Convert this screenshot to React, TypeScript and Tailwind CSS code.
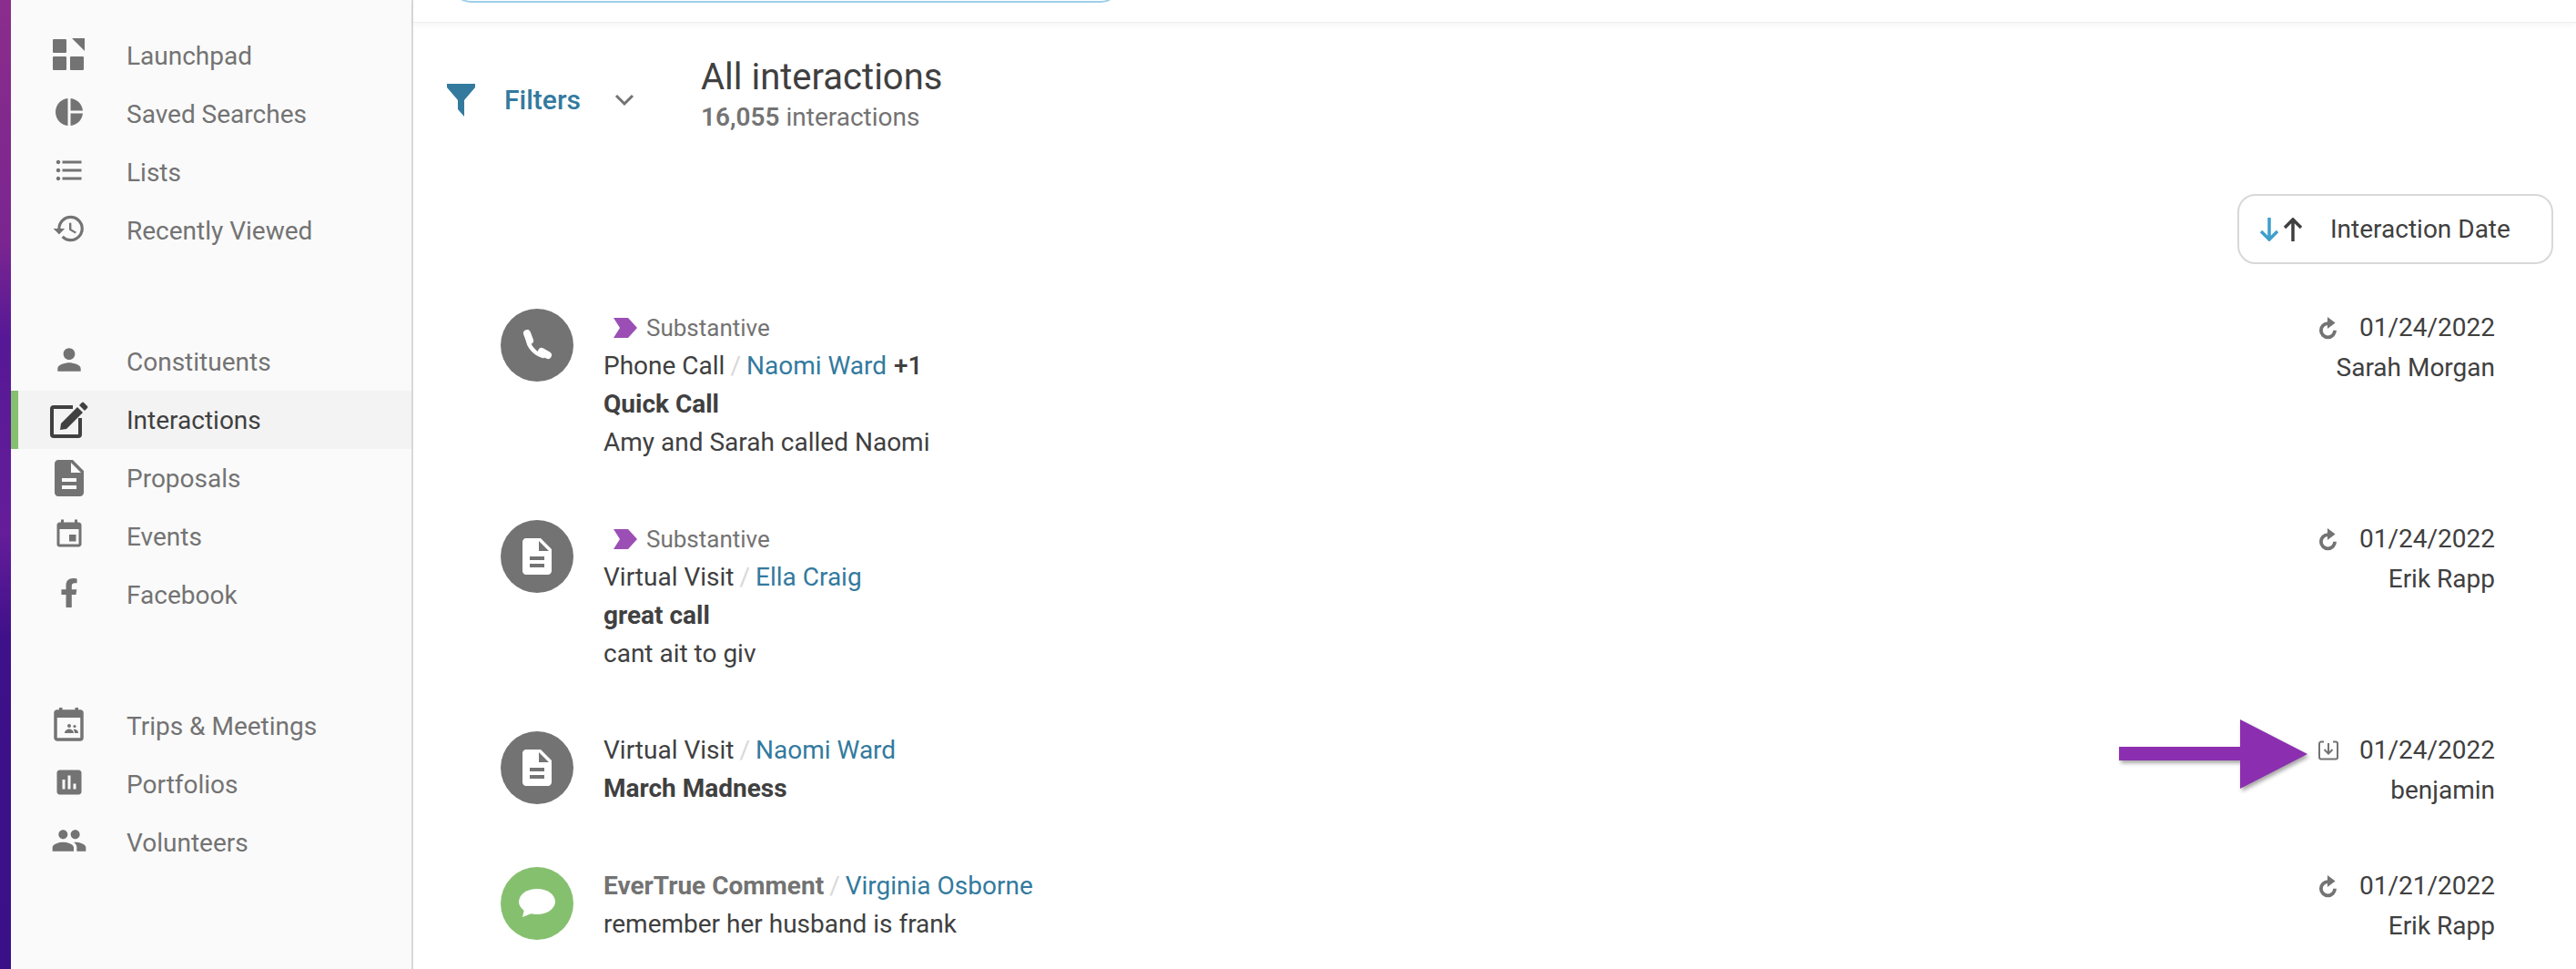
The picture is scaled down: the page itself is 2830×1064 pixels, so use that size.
import { type JSX, type ReactNode } from 'react'
import { MdAssessment, MdDescription, MdEvent, MdFormatListBulleted, MdHistory, MdPeople, MdPerson, MdPieChart } from 'react-icons/md'
import { FaFacebookF } from 'react-icons/fa'

function LaunchpadIcon(): JSX.Element {
  return (
    <svg width="36" height="36" viewBox="0 0 36 36" fill="currentColor">
      <rect x="0" y="1" width="15" height="15" rx="1" />
      <rect x="0" y="20" width="15" height="15" rx="1" />
      <rect x="19" y="20" width="15" height="15" rx="1" />
      <polygon points="21,0 35,0 35,14" />
    </svg>
  )
}

function EditIcon(): JSX.Element {
  return (
    <svg width="42" height="40" viewBox="0 0 42 40" fill="none">
      <path d="M25 6H4a2 2 0 0 0-2 2v28a2 2 0 0 0 2 2h27a2 2 0 0 0 2-2V18" stroke="currentColor" strokeWidth="4" />
      <path d="M12 24L30 6l6 6-18 18-7 1z" fill="currentColor" />
      <path d="M32 4l3-3a1.5 1.5 0 0 1 2 0l4 4a1.5 1.5 0 0 1 0 2l-3 3z" fill="currentColor" />
    </svg>
  )
}

function TripsIcon(): JSX.Element {
  return (
    <svg width="33" height="38" viewBox="0 0 33 38" fill="none">
      <rect x="2" y="5" width="29" height="31" rx="2" stroke="currentColor" strokeWidth="3.5" />
      <rect x="2" y="5" width="29" height="7" fill="currentColor" />
      <rect x="6" y="1" width="3.5" height="6" fill="currentColor" />
      <rect x="23.5" y="1" width="3.5" height="6" fill="currentColor" />
      <circle cx="17" cy="21" r="2" fill="currentColor" />
      <circle cx="23" cy="21.5" r="1.6" fill="currentColor" />
      <path d="M12 29c0-3 3-4.500 5-4.500s5 1.500 5 4.500zM23 29c0-2-.6-3-1.500-4 2-.6 5.500.6 5.500 4z" fill="currentColor" />
    </svg>
  )
}

function PhoneIcon(): JSX.Element {
  return (
    <svg width="34" height="34" viewBox="0 0 34 34" fill="none" stroke="white" strokeLinecap="round">
      <path d="M6 4l3 8" strokeWidth="8" />
      <path d="M7 10c0 8 8 17 17 19" strokeWidth="4.500" />
      <path d="M22 24l7 4" strokeWidth="8" />
    </svg>
  )
}

function RedoIcon(): JSX.Element {
  return (
    <svg width="22" height="26" viewBox="0 0 20 24" fill="none" className="text-[#737373]">
      <path d="M16.500 14.500a7 7 0 1 1-7-7" stroke="currentColor" strokeWidth="3.500" />
      <polygon points="9,1 17,7 9,13" fill="currentColor" />
    </svg>
  )
}

function ImportIcon(): JSX.Element {
  return (
    <svg width="22" height="22" viewBox="0 0 22 22" fill="none" className="text-[#737373]">
      <path d="M6 1.500H3a2 2 0 0 0-2 2v15a2 2 0 0 0 2 2h16a2 2 0 0 0 2-2v-15a2 2 0 0 0-2-2h-3" stroke="currentColor" strokeWidth="2" />
      <path d="M11 3v11M6.500 10l4.500 4.500 4.500-4.500" stroke="currentColor" strokeWidth="2" />
    </svg>
  )
}

function NavItem({ icon, label, active, nudge }: { icon: ReactNode; label: string; active?: boolean; nudge?: string }): JSX.Element {
  return (
    <div className={`flex h-[64px] items-center ${active ? 'border-l-8 border-[#85c06f] bg-[#f3f3f3] text-[#404040]' : 'border-l-8 border-transparent text-[#737373]'}`}>
      <span className={`flex w-[119px] justify-center pr-[8px] ${nudge ?? '-translate-y-[2px]'}`}>{icon}</span>
      <span className="pt-[2px] text-[28px] leading-[42px]">{label}</span>
    </div>
  )
}

function Circle({ children, green }: { children: ReactNode; green?: boolean }): JSX.Element {
  return (
    <div className={`flex h-[80px] w-[80px] shrink-0 items-center justify-center rounded-full text-white ${green ? 'bg-[#85c06f]' : 'bg-[#737373]'}`}>
      {children}
    </div>
  )
}

function Substantive(): JSX.Element {
  return (
    <div className="flex h-[42px] items-center pl-[11px] text-[26px] text-[#737373]">
      <svg width="26" height="22" viewBox="0 0 26 22" className="mr-[10px]">
        <polygon points="0,0 16,0 26,11 16,22 0,22 7,11" fill="#9b4fb5" />
      </svg>
      Substantive
    </div>
  )
}

function Interaction({ icon, substantive, type, typeBold, name, extra, title, note, date, by, imported, green, tall }: {
  icon: ReactNode
  substantive?: boolean
  type: string
  typeBold?: boolean
  name: string
  extra?: string
  title?: string
  note?: string
  date: string
  by: string
  imported?: boolean
  green?: boolean
  tall?: boolean
}): JSX.Element {
  return (
    <div className="mb-[64px] flex">
      <Circle green={green}>{icon}</Circle>
      <div className="ml-[33px] flex-1 text-[28px] leading-[42px] text-[#404040]">
        {substantive && <Substantive />}
        <div>
          <span className={typeBold ? 'font-bold text-[#737373]' : ''}>{type}</span>
          <span className="mx-[6px] text-[#d8d8d8]">/</span>
          <span className="text-[#337a9e]">{name}</span>
          {extra && <span className="ml-[8px] font-medium">{extra}</span>}
        </div>
        {title && <div className="font-bold">{title}</div>}
        {note && <div>{note}</div>}
      </div>
      <div className={`-mt-[1px] flex flex-col items-end text-[28px] leading-[44px] text-[#404040] ${tall ? 'h-[86px]' : ''}`}>
        <div className="flex items-center gap-[23px]">
          {imported ? <ImportIcon /> : <RedoIcon />}
          <span>{date}</span>
        </div>
        <div>{by}</div>
      </div>
    </div>
  )
}

export default function App(): JSX.Element {
  return (
    <div className="relative flex h-[1064px] w-[2830px] overflow-hidden bg-white font-['Roboto',sans-serif]">
      <div className="w-[12px] shrink-0 bg-[linear-gradient(to_bottom,#8b2d8c_0%,#7a2590_25%,#561896_35%,#651d9a_55%,#3e1089_66%,#3a1088_100%)]" />
      <aside className="w-[442px] shrink-0 border-r-2 border-[#d8d8d8] bg-[#fafafa] pt-[29px]">
        <NavItem icon={<LaunchpadIcon />} label="Launchpad" nudge="-translate-y-[1px]" />
        <NavItem icon={<MdPieChart size={36} />} label="Saved Searches" />
        <NavItem icon={<MdFormatListBulleted size={36} />} label="Lists" />
        <NavItem icon={<MdHistory size={38} />} label="Recently Viewed" />
        <div className="h-[80px]" />
        <NavItem icon={<MdPerson size={38} />} label="Constituents" />
        <NavItem icon={<EditIcon />} label="Interactions" active nudge="translate-y-[0px]" />
        <NavItem icon={<MdDescription size={48} />} label="Proposals" nudge="translate-y-[0px]" />
        <NavItem icon={<MdEvent size={36} />} label="Events" />
        <NavItem icon={<FaFacebookF size={32} />} label="Facebook" />
        <div className="h-[80px]" />
        <NavItem icon={<TripsIcon />} label="Trips & Meetings" />
        <NavItem icon={<MdAssessment size={36} />} label="Portfolios" />
        <NavItem icon={<MdPeople size={40} />} label="Volunteers" />
      </aside>

      <main className="flex min-w-0 flex-1 flex-col">
        <div className="h-[25px] shrink-0 border-b border-[#eeeeee] shadow-[0_3px_6px_rgba(0,0,0,0.04)]">
          <div className="-mt-[40px] ml-[42px] h-[43px] w-[735px] rounded-[22px] border-2 border-[#9ccfe8]" />
        </div>

        <div className="mt-[37px] flex items-center pl-[37px]">
          <div className="flex w-[279px] items-center pt-[8px]">
            <svg width="31" height="36" viewBox="0 0 31 36" className="mr-[32px]">
              <polygon points="0,0 31,0 31,4 19,18 19,36 12,28 12,18 0,4" fill="#337a9e" />
            </svg>
            <span className="text-[30px] leading-[42px] font-medium text-[#337a9e]">Filters</span>
            <svg width="22" height="14" viewBox="0 0 22 14" fill="none" className="ml-[37px]">
              <path d="M2 2l9 9 9-9" stroke="#737373" strokeWidth="3" />
            </svg>
          </div>
          <div>
            <div className="text-[40px] leading-[46px] text-[#404040]">All interactions</div>
            <div className="text-[28px] leading-[42px] text-[#737373]">
              <span className="font-semibold">16,055</span> interactions
            </div>
          </div>
        </div>

        <div className="mt-[63px] flex justify-end pr-[25px]">
          <div className="flex h-[77px] w-[347px] items-center rounded-[20px] border-2 border-[#d8d8d8] pl-[23px] text-[28px] text-[#404040]">
            <svg width="20" height="26" viewBox="0 0 20 26" fill="none" className="mr-[6px]">
              <path d="M10 0v24M1 15l9 9 9-9" stroke="#3f9fcb" strokeWidth="3.500" />
            </svg>
            <svg width="20" height="26" viewBox="0 0 20 26" fill="none" className="mr-[31px]">
              <path d="M10 26V2M1 11l9-9 9 9" stroke="#404040" strokeWidth="3.500" />
            </svg>
            Interaction Date
          </div>
        </div>

        <div className="mt-[49px] pr-[89px] pl-[96px]">
          <Interaction icon={<PhoneIcon />} substantive type="Phone Call" name="Naomi Ward" extra="+1" title="Quick Call" note="Amy and Sarah called Naomi" date="01/24/2022" by="Sarah Morgan" />
          <Interaction icon={<MdDescription size={48} />} substantive type="Virtual Visit" name="Ella Craig" title="great call" note="cant ait to giv" date="01/24/2022" by="Erik Rapp" />
          <Interaction icon={<MdDescription size={48} />} type="Virtual Visit" name="Naomi Ward" title="March Madness" date="01/24/2022" by="benjamin" imported tall />
          <Interaction
            icon={
              <svg width="40" height="32" viewBox="0 0 40 32" fill="white">
                <ellipse cx="20" cy="14" rx="20" ry="14" />
                <path d="M6 22L4 31l10-4z" />
              </svg>
            }
            green
            type="EverTrue Comment"
            typeBold
            name="Virginia Osborne"
            note="remember her husband is frank"
            date="01/21/2022"
            by="Erik Rapp"
          />
        </div>
      </main>

      <svg width="210" height="82" viewBox="0 0 210 82" className="absolute top-[789px] left-[2328px] drop-shadow-[2px_3px_2px_rgba(0,0,0,0.35)]">
        <polygon points="0,31 133,31 133,1 207,39 133,77 133,46 0,46" fill="#8b2fb0" />
      </svg>
    </div>
  )
}
